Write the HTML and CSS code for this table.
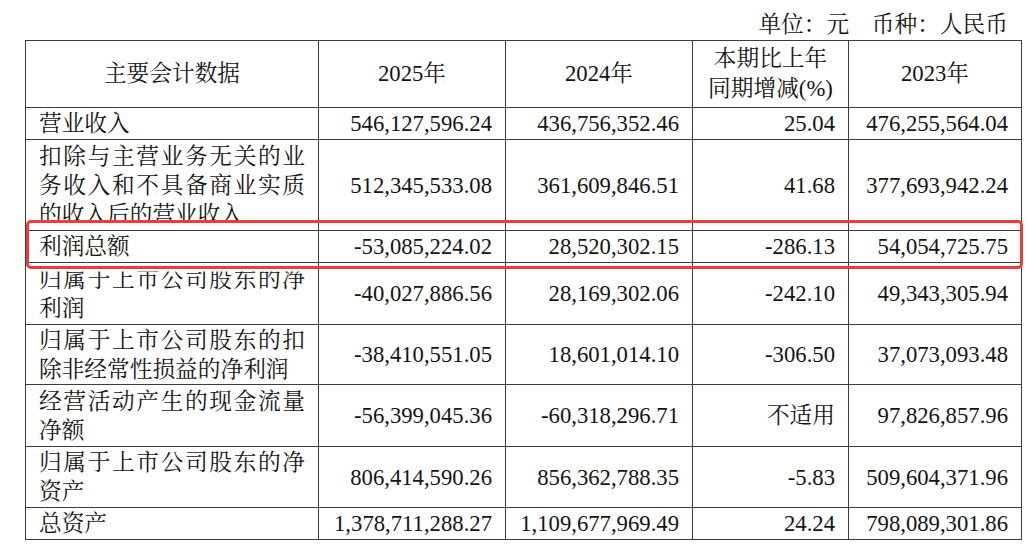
FILE: index.html
```html
<!DOCTYPE html>
<html lang="zh-CN">
<head>
<meta charset="utf-8">
<title>主要会计数据</title>
<link rel="stylesheet" href="styles.css">
</head>
<body>
<div class="page">
  <div class="caption">单位：元　币种：人民币</div>
  <div class="table-wrap">
    <table class="data">
      <colgroup>
        <col class="c1"><col class="c2"><col class="c3"><col class="c4"><col class="c5">
      </colgroup>
      <thead>
        <tr class="r-head">
          <th>主要会计数据</th>
          <th>2025年</th>
          <th>2024年</th>
          <th>本期比上年<br>同期增减(%)</th>
          <th>2023年</th>
        </tr>
      </thead>
      <tbody>
        <tr class="r-32">
          <td class="label">营业收入</td>
          <td>546,127,596.24</td>
          <td>436,756,352.46</td>
          <td>25.04</td>
          <td>476,255,564.04</td>
        </tr>
        <tr class="r-91">
          <td class="label"><div class="clip-bottom">扣除与主营业务无关的业务收入和不具备商业实质的收入后的营业收入</div></td>
          <td>512,345,533.08</td>
          <td>361,609,846.51</td>
          <td>41.68</td>
          <td>377,693,942.24</td>
        </tr>
        <tr class="r-32">
          <td class="label">利润总额</td>
          <td>-53,085,224.02</td>
          <td>28,520,302.15</td>
          <td>-286.13</td>
          <td>54,054,725.75</td>
        </tr>
        <tr class="r-62">
          <td class="label"><div class="clip-top">归属于上市公司股东的净利润</div></td>
          <td>-40,027,886.56</td>
          <td>28,169,302.06</td>
          <td>-242.10</td>
          <td>49,343,305.94</td>
        </tr>
        <tr class="r-60">
          <td class="label">归属于上市公司股东的扣除非经常性损益的净利润</td>
          <td>-38,410,551.05</td>
          <td>18,601,014.10</td>
          <td>-306.50</td>
          <td>37,073,093.48</td>
        </tr>
        <tr class="r-62">
          <td class="label">经营活动产生的现金流量净额</td>
          <td>-56,399,045.36</td>
          <td>-60,318,296.71</td>
          <td>不适用</td>
          <td>97,826,857.96</td>
        </tr>
        <tr class="r-61">
          <td class="label">归属于上市公司股东的净资产</td>
          <td>806,414,590.26</td>
          <td>856,362,788.35</td>
          <td>-5.83</td>
          <td>509,604,371.96</td>
        </tr>
        <tr class="r-32">
          <td class="label">总资产</td>
          <td>1,378,711,288.27</td>
          <td>1,109,677,969.49</td>
          <td>24.24</td>
          <td>798,089,301.86</td>
        </tr>
      </tbody>
    </table>
    <div class="highlight"></div>
  </div>
</div>
</body>
</html>
```

FILE: styles.css
```css
html, body {
  margin: 0;
  padding: 0;
  background: #ffffff;
}

body {
  font-family: "Liberation Serif", "Noto Serif CJK SC", "Noto Sans CJK SC", serif;
  font-size: 22.7px;
  color: #141414;
}

.page {
  padding-left: 25px;
}

.caption {
  box-sizing: border-box;
  width: 996px;
  height: 40px;
  padding-top: 10px;
  padding-right: 13px;
  line-height: 30px;
  text-align: right;
}

.table-wrap {
  position: relative;
  width: 996px;
}

.data {
  width: 996px;
  border-collapse: collapse;
  table-layout: fixed;
}

.c1 { width: 293px; }
.c2 { width: 187px; }
.c3 { width: 187px; }
.c4 { width: 156px; }
.c5 { width: 173px; }

.data th,
.data td {
  border: 1px solid #3c3c3c;
  padding: 0 13px;
  line-height: 29px;
  vertical-align: middle;
  font-weight: normal;
  white-space: normal;
}

.data th {
  text-align: center;
  line-height: 30px;
}

.data td {
  text-align: right;
}

.data td.label {
  text-align: justify;
  text-align-last: left;
}

.r-head { height: 67px; }
.r-32 { height: 32px; }
.r-91 { height: 91px; }
.r-62 { height: 62px; }
.r-60 { height: 60px; }
.r-61 { height: 61px; }

.clip-bottom {
  clip-path: inset(0 0 8px 0);
}

.clip-top {
  clip-path: inset(7px 0 0 0);
}

.highlight {
  position: absolute;
  left: 1px;
  top: 180px;
  width: 997px;
  height: 49px;
  box-sizing: border-box;
  border: 3px solid #f03a3c;
  border-radius: 5px;
  pointer-events: none;
}
```
